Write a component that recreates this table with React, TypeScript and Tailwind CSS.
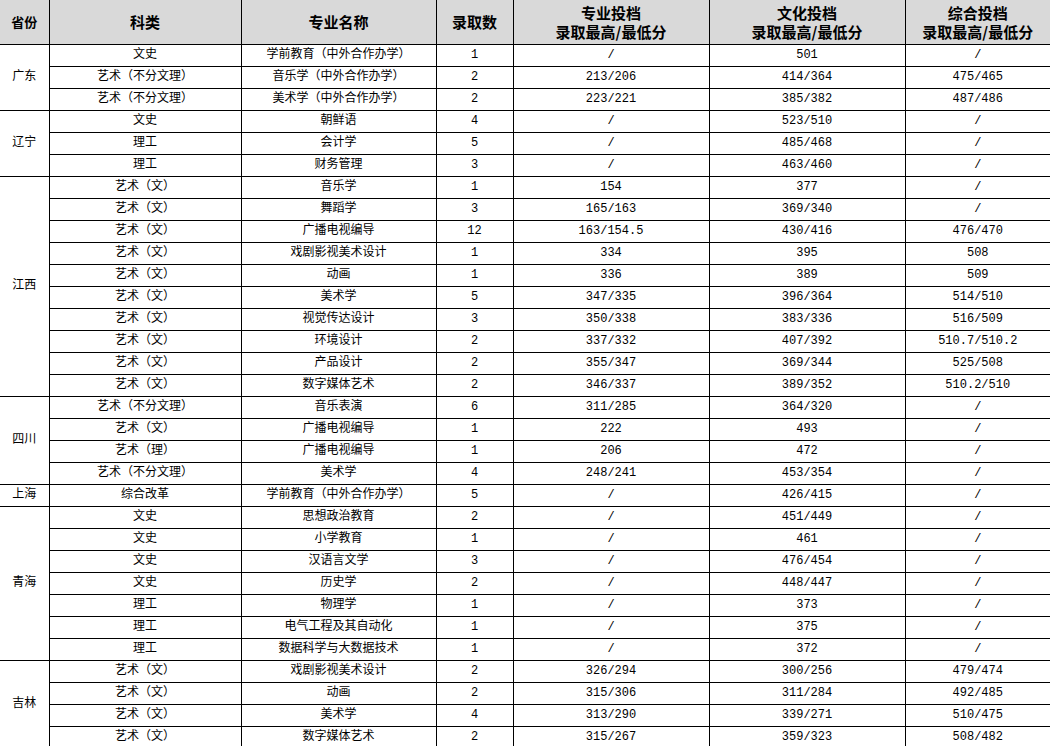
import React from "react";

type Row = [string, string, string, string, string, string];

const groups: { province: string; rows: Row[] }[] = [
  {
    province: "广东",
    rows: [
      ["文史", "学前教育（中外合作办学）", "1", "/", "501", "/"],
      ["艺术（不分文理）", "音乐学（中外合作办学）", "2", "213/206", "414/364", "475/465"],
      ["艺术（不分文理）", "美术学（中外合作办学）", "2", "223/221", "385/382", "487/486"],
    ],
  },
  {
    province: "辽宁",
    rows: [
      ["文史", "朝鲜语", "4", "/", "523/510", "/"],
      ["理工", "会计学", "5", "/", "485/468", "/"],
      ["理工", "财务管理", "3", "/", "463/460", "/"],
    ],
  },
  {
    province: "江西",
    rows: [
      ["艺术（文）", "音乐学", "1", "154", "377", "/"],
      ["艺术（文）", "舞蹈学", "3", "165/163", "369/340", "/"],
      ["艺术（文）", "广播电视编导", "12", "163/154.5", "430/416", "476/470"],
      ["艺术（文）", "戏剧影视美术设计", "1", "334", "395", "508"],
      ["艺术（文）", "动画", "1", "336", "389", "509"],
      ["艺术（文）", "美术学", "5", "347/335", "396/364", "514/510"],
      ["艺术（文）", "视觉传达设计", "3", "350/338", "383/336", "516/509"],
      ["艺术（文）", "环境设计", "2", "337/332", "407/392", "510.7/510.2"],
      ["艺术（文）", "产品设计", "2", "355/347", "369/344", "525/508"],
      ["艺术（文）", "数字媒体艺术", "2", "346/337", "389/352", "510.2/510"],
    ],
  },
  {
    province: "四川",
    rows: [
      ["艺术（不分文理）", "音乐表演", "6", "311/285", "364/320", "/"],
      ["艺术（文）", "广播电视编导", "1", "222", "493", "/"],
      ["艺术（理）", "广播电视编导", "1", "206", "472", "/"],
      ["艺术（不分文理）", "美术学", "4", "248/241", "453/354", "/"],
    ],
  },
  {
    province: "上海",
    rows: [["综合改革", "学前教育（中外合作办学）", "5", "/", "426/415", "/"]],
  },
  {
    province: "青海",
    rows: [
      ["文史", "思想政治教育", "2", "/", "451/449", "/"],
      ["文史", "小学教育", "1", "/", "461", "/"],
      ["文史", "汉语言文学", "3", "/", "476/454", "/"],
      ["文史", "历史学", "2", "/", "448/447", "/"],
      ["理工", "物理学", "1", "/", "373", "/"],
      ["理工", "电气工程及其自动化", "1", "/", "375", "/"],
      ["理工", "数据科学与大数据技术", "1", "/", "372", "/"],
    ],
  },
  {
    province: "吉林",
    rows: [
      ["艺术（文）", "戏剧影视美术设计", "2", "326/294", "300/256", "479/474"],
      ["艺术（文）", "动画", "2", "315/306", "311/284", "492/485"],
      ["艺术（文）", "美术学", "4", "313/290", "339/271", "510/475"],
      ["艺术（文）", "数字媒体艺术", "2", "315/267", "359/323", "508/482"],
    ],
  },
];

const th = "border border-black bg-[#d9d9d9] font-bold text-center align-middle p-0";
const td = "border border-black text-center align-middle p-0 leading-none";

export default function App() {
  return (
    <div className="w-[1050px] h-[746px] overflow-hidden bg-white text-black">
      <table
        className="border-collapse border-hidden table-fixed w-[1050px] text-[12px]"
        style={{ fontFamily: '"Liberation Mono", "Noto Sans CJK SC", monospace' }}
      >
        <colgroup>
          <col className="w-[49px]" />
          <col className="w-[192px]" />
          <col className="w-[195px]" />
          <col className="w-[77px]" />
          <col className="w-[196px]" />
          <col className="w-[196px]" />
          <col />
        </colgroup>
        <thead style={{ fontFamily: '"Noto Sans CJK SC", sans-serif' }}>
          <tr className="h-[44px]">
            <th className={`${th} text-[13px]`}>省份</th>
            <th className={`${th} text-[15px]`}>科类</th>
            <th className={`${th} text-[15px]`}>专业名称</th>
            <th className={`${th} text-[15px]`}>录取数</th>
            <th className={`${th} text-[15px] leading-[19px]`}>
              专业投档
              <br />
              录取最高/最低分
            </th>
            <th className={`${th} text-[15px] leading-[19px]`}>
              文化投档
              <br />
              录取最高/最低分
            </th>
            <th className={`${th} text-[15px] leading-[19px]`}>
              综合投档
              <br />
              录取最高/最低分
            </th>
          </tr>
        </thead>
        <tbody>
          {groups.map((g) =>
            g.rows.map((r, i) => (
              <tr key={g.province + i} className="h-[22px]">
                {i === 0 && (
                  <td rowSpan={g.rows.length} className={td}>
                    {g.province}
                  </td>
                )}
                {r.map((c, j) => (
                  <td key={j} className={td}>
                    {c}
                  </td>
                ))}
              </tr>
            ))
          )}
        </tbody>
      </table>
    </div>
  );
}
